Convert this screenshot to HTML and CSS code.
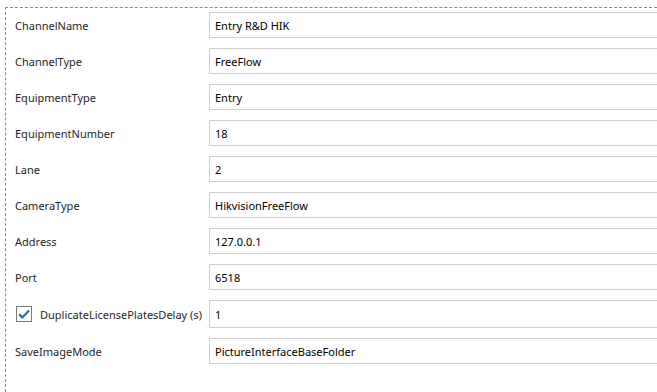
FILE: index.html
```html
<!DOCTYPE html>
<html lang="en">
<head>
    <meta charset="UTF-8">
    <meta name="viewport" content="width=device-width, initial-scale=1.0">
    <title>Channel Settings</title>
    <link rel="stylesheet" href="styles.css">
</head>
<body>
    <div class="panel">
        <div class="grid">
            <label class="name">ChannelName</label>
            <div class="field">Entry R&amp;D HIK</div>

            <label class="name">ChannelType</label>
            <div class="field">FreeFlow</div>

            <label class="name">EquipmentType</label>
            <div class="field">Entry</div>

            <label class="name">EquipmentNumber</label>
            <div class="field">18</div>

            <label class="name">Lane</label>
            <div class="field">2</div>

            <label class="name">CameraType</label>
            <div class="field">HikvisionFreeFlow</div>

            <label class="name">Address</label>
            <div class="field">127.0.0.1</div>

            <label class="name">Port</label>
            <div class="field">6518</div>

            <label class="name check">
                <span class="box">
                    <svg width="12" height="10" viewBox="0 0 12 10"><path d="M1 5.2 L4.4 8.4 L11 1.6" fill="none" stroke="#2b6aa5" stroke-width="2.2"/></svg>
                </span>
                DuplicateLicensePlatesDelay (s)
            </label>
            <div class="field tall">1</div>

            <label class="name">SaveImageMode</label>
            <div class="field">PictureInterfaceBaseFolder</div>
        </div>
    </div>
</body>
</html>
```

FILE: styles.css
```css
* { margin: 0; padding: 0; box-sizing: border-box; }
body { font-family: "Noto Sans", "Open Sans", sans-serif; font-size: 11px; background: #fff; color: #1e1e1e; overflow: hidden; width: 657px; height: 392px; }
.panel { margin: 7px 0 0 5px; width: 652px; height: 385px; border: 1px dashed #8a8a8a; border-right: none; border-bottom: none; padding: 4px 0 0 9px; }
.grid { display: grid; grid-template-columns: 194px 1fr; row-gap: 10px; align-items: center; }
.name { display: flex; align-items: center; height: 26px; white-space: nowrap; }
.check { gap: 8px; padding-left: 1px; }
.box { width: 16px; height: 16px; border: 1px solid #7a7a7a; display: flex; align-items: center; justify-content: center; background: #fff; flex: none; }
.field { height: 26px; border: 1px solid #cfcfcf; border-right: none; padding: 0 5px; display: flex; align-items: center; color: #000; white-space: nowrap; }
.field.tall { height: 28px; }
```
